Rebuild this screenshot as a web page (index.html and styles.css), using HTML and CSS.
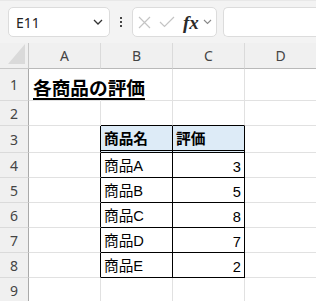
FILE: index.html
```html
<!DOCTYPE html>
<html lang="ja">
<head>
<meta charset="utf-8">
<link rel="stylesheet" href="styles.css">
</head>
<body>
<div class="toolbar">
  <div class="namebox">
    <span class="nb-text">E11</span>
    <svg class="chev" width="10" height="6" viewBox="0 0 10 6"><path d="M1 1 L5 5 L9 1" fill="none" stroke="#333" stroke-width="1.3"/></svg>
  </div>
  <div class="dots"><i></i><i></i><i></i></div>
  <div class="fbtns">
    <svg class="ic-x" width="13" height="13" viewBox="0 0 13 13"><path d="M1 1 L12 12 M12 1 L1 12" stroke="#c4c4c4" stroke-width="1.2" fill="none"/></svg>
    <svg class="ic-ok" width="16" height="12" viewBox="0 0 16 12"><path d="M1 6 L5.5 10.5 L15 1" stroke="#c4c4c4" stroke-width="1.2" fill="none"/></svg>
    <span class="fx">fx</span>
    <svg class="chev-s" width="9" height="6" viewBox="0 0 9 6"><path d="M1 1 L4.5 4.5 L8 1" fill="none" stroke="#888" stroke-width="1.1"/></svg>
  </div>
  <div class="fbar"></div>
</div>
<div class="sheet">
  <div class="corner"><span class="tri"></span></div>
  <div class="colh">A</div>
  <div class="colh">B</div>
  <div class="colh">C</div>
  <div class="colh">D</div>

  <div class="rowh r1">1</div>
  <div class="cell r1 title-cell"><span class="title">各商品の評価</span></div>
  <div class="cell r1 nb"></div>
  <div class="cell r1"></div>
  <div class="cell r1"></div>

  <div class="rowh">2</div>
  <div class="cell"></div>
  <div class="cell bb"></div>
  <div class="cell bb"></div>
  <div class="cell"></div>

  <div class="rowh r3">3</div>
  <div class="cell br r3"></div>
  <div class="cell t thead br"><span>商品名</span></div>
  <div class="cell t thead br"><span>評価</span></div>
  <div class="cell r3"></div>

  <div class="rowh">4</div>
  <div class="cell br"></div>
  <div class="cell t br">商品A</div>
  <div class="cell t num br">3</div>
  <div class="cell"></div>

  <div class="rowh">5</div>
  <div class="cell br"></div>
  <div class="cell t br">商品B</div>
  <div class="cell t num br">5</div>
  <div class="cell"></div>

  <div class="rowh">6</div>
  <div class="cell br"></div>
  <div class="cell t br">商品C</div>
  <div class="cell t num br">8</div>
  <div class="cell"></div>

  <div class="rowh">7</div>
  <div class="cell br"></div>
  <div class="cell t br">商品D</div>
  <div class="cell t num br">7</div>
  <div class="cell"></div>

  <div class="rowh">8</div>
  <div class="cell br"></div>
  <div class="cell t br">商品E</div>
  <div class="cell t num br">2</div>
  <div class="cell"></div>

  <div class="rowh">9</div>
  <div class="cell"></div>
  <div class="cell"></div>
  <div class="cell"></div>
  <div class="cell"></div>
</div>
</body>
</html>
```
FILE: styles.css
```css
* { box-sizing: border-box; }
html, body { margin: 0; padding: 0; }
body {
  width: 316px;
  height: 301px;
  overflow: hidden;
  background: #ffffff;
  font-family: "Noto Sans", "Liberation Sans", sans-serif;
}
.toolbar {
  height: 43px;
  background: #f3f3f3;
  border-top: 1px solid #e8e8e8;
  display: flex;
  align-items: flex-start;
  padding: 6px 0 0 8px;
}
.namebox {
  width: 102px;
  height: 30px;
  background: #fff;
  border: 1px solid #dcdcdc;
  border-radius: 5px;
  display: flex;
  align-items: center;
  justify-content: space-between;
  padding: 0 6px 0 7px;
}
.nb-text {
  font-size: 14px;
  color: #222;
  font-family: "Noto Sans", sans-serif;
}
.dots {
  width: 22px;
  height: 30px;
  display: flex;
  flex-direction: column;
  align-items: center;
  justify-content: center;
  gap: 2px;
}
.dots i {
  display: block;
  width: 2px;
  height: 2px;
  background: #444;
}
.fbtns {
  width: 85px;
  height: 30px;
  background: #fff;
  border: 1px solid #dcdcdc;
  border-radius: 5px;
  display: flex;
  align-items: center;
  padding-left: 5px;
}
.ic-x { margin-right: 8px; }
.ic-ok { margin-right: 8px; }
.fx {
  font-family: "Liberation Serif", serif;
  font-style: italic;
  font-weight: 600;
  font-size: 19px;
  color: #2a2a2a;
  margin-right: 4px;
  line-height: 1;
}
.fbar {
  margin-left: 6px;
  flex: 1;
  height: 30px;
  background: #fff;
  border: 1px solid #dcdcdc;
  border-right: none;
  border-radius: 5px 0 0 5px;
}
.sheet {
  display: grid;
  grid-template-columns: 29px 72px 72px 72px 72px;
  grid-template-rows: 26px 32px 25px 27px 25px 25px 25px 25px 25px 25px;
}
.corner {
  background: #f0f0f0;
  border-right: 1px solid #c8c8c8;
  border-bottom: 1px solid #c8c8c8;
  position: relative;
}
.tri {
  position: absolute;
  right: 3px;
  bottom: 4px;
  width: 0;
  height: 0;
  border-left: 17px solid transparent;
  border-bottom: 20px solid #dadada;
}
.colh {
  background: #f0f0f0;
  border-right: 1px solid #dadada;
  border-bottom: 1px solid #b9b9b9;
  display: flex;
  align-items: center;
  justify-content: center;
  font-size: 14px;
  color: #444;
}
.rowh {
  background: #f0f0f0;
  border-right: 1px solid #a9a9a9;
  border-bottom: 1px solid #dadada;
  display: flex;
  align-items: center;
  justify-content: center;
  font-size: 14px;
  color: #444;
}
.cell {
  border-right: 1px solid #e1e1e1;
  border-bottom: 1px solid #e1e1e1;
  font-family: "Liberation Sans", "Noto Sans CJK JP", sans-serif;
  font-size: 14.67px;
  color: #000;
  display: flex;
  align-items: flex-end;
  padding: 0 3px 2px 3px;
  white-space: nowrap;
  min-width: 0;
}
.title-cell { overflow: visible; padding-left: 4px; padding-bottom: 3px; }
.title {
  font-family: "Noto Sans CJK JP", sans-serif;
  font-weight: bold;
  font-size: 18.67px;
  line-height: 1;
  text-decoration: underline;
  text-underline-offset: 3px;
  text-decoration-thickness: 1.5px;
}
.cell.bb { border-bottom-color: #000; }
.cell.br { border-right-color: #000; }
.cell.t { border-bottom-color: #000; }
.cell.thead {
  background: #ddebf7;
  border-bottom: 3px double #000;
  font-weight: bold;
  font-family: "Noto Sans CJK JP", sans-serif;
}
.cell.num { justify-content: flex-end; }
.r1.title-cell { border-right-color: transparent; }
```
